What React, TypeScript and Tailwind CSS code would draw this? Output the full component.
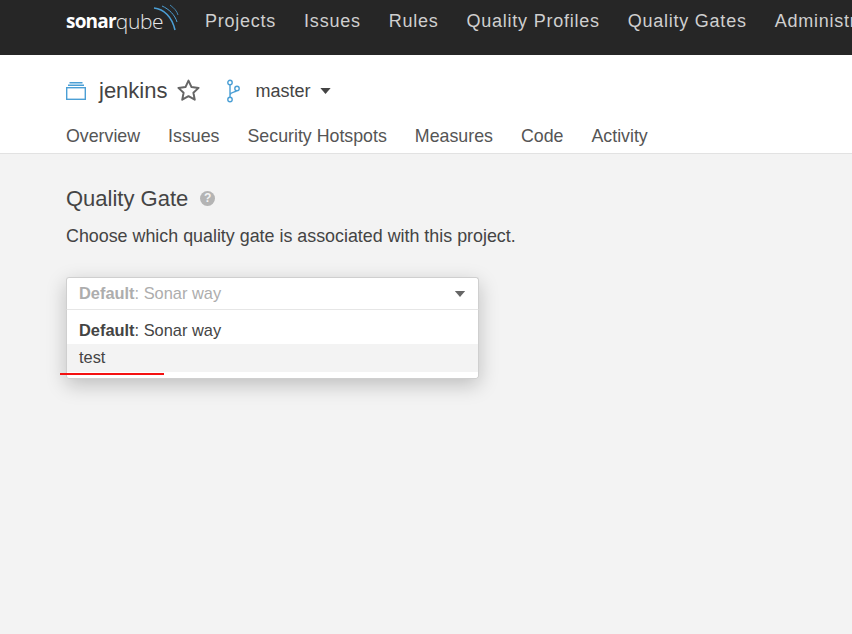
const navItems = ["Projects", "Issues", "Rules", "Quality Profiles", "Quality Gates", "Administration"];
const tabs = ["Overview", "Issues", "Security Hotspots", "Measures", "Code", "Activity"];

function Caret({ className }: { className: string }) {
  return (
    <svg viewBox="0 0 12 7" className={className}>
      <path d="M0 0h12L6 7z" fill="currentColor" />
    </svg>
  );
}

export default function App() {
  return (
    <div className="h-[634px] w-[852px] overflow-hidden bg-[#f3f3f3] font-['Liberation_Sans',Arial,sans-serif] text-[#444]">
      <header className="flex h-[55px] items-start overflow-hidden whitespace-nowrap bg-[#262626] pl-[66px]">
        <div className="relative mr-[26px] flex h-[43px] w-[113px] shrink-0 items-center font-['Open_Sans',sans-serif]">
          <span className="text-[19px] font-bold tracking-[-0.8px] text-white">sonar</span>
          <span className="text-[21px] font-light tracking-[-0.4px] text-[#e8e8e8]">qube</span>
          <svg viewBox="0 0 30 32" className="absolute left-[84px] top-[3px] h-[32px] w-[30px]" fill="none">
            <path d="M4 5C14 6 22 14 25 27" stroke="#4b9fd5" strokeWidth="1.6" />
            <path d="M12 3C19 6 25 12 27 19" stroke="#4b9fd5" strokeWidth="1" />
            <path d="M20 2C24 5 27 8 28 12" stroke="#4b9fd5" strokeWidth="0.8" />
          </svg>
        </div>
        <nav className="flex h-[43px] items-center gap-[28px] text-[18px] tracking-[0.76px] text-[#cfcfcf]">
          {navItems.map((item) => (
            <a key={item}>{item}</a>
          ))}
        </nav>
      </header>

      <div className="h-[99px] border-b border-[#e2e2e2] bg-white px-[66px]">
        <div className="flex h-[71px] items-center">
          <svg viewBox="0 0 20 18" className="h-[18px] w-[20px]" fill="none" stroke="#4b9fd5" strokeWidth="1.4">
            <rect x="0.7" y="5.7" width="18.6" height="11.6" />
            <path d="M2 3.2h16M3.5 0.8h13" />
          </svg>
          <span className="ml-[13px] text-[22px] text-[#444]">jenkins</span>
          <svg viewBox="0 0 24 24" className="ml-[9px] h-[25px] w-[25px]" fill="none" stroke="#666" strokeWidth="1.9" strokeLinejoin="round">
            <path d="M12 2.5l2.9 6.2 6.8.8-5 4.6 1.3 6.7-6-3.3-6 3.3 1.3-6.7-5-4.6 6.8-.8z" />
          </svg>
          <svg viewBox="0 0 14 24" className="ml-[25px] h-[24px] w-[14px]" fill="none" stroke="#4b9fd5" strokeWidth="1.4">
            <circle cx="4" cy="3.5" r="2.2" />
            <circle cx="4" cy="20.5" r="2.2" />
            <circle cx="11" cy="9.5" r="2.2" />
            <path d="M4 5.7v12.6M4 16c0-3 6-2.5 6.5-4.5" />
          </svg>
          <span className="ml-[15px] pt-[1px] text-[18px] text-[#444]">master</span>
          <Caret className="ml-[9px] h-[6px] w-[11px] text-[#444]" />
        </div>
        <nav className="flex gap-[28px] text-[17.8px] leading-[20px] text-[#555]">
          {tabs.map((tab) => (
            <a key={tab}>{tab}</a>
          ))}
        </nav>
      </div>

      <main className="px-[66px] pt-[31px]">
        <div className="flex h-[26px] items-center">
          <h1 className="text-[22px] text-[#444]">Quality Gate</h1>
          <span className="ml-[12px] flex h-[15px] w-[15px] items-center justify-center rounded-full bg-[#b4b4b4] text-[12px] font-bold text-[#f3f3f3]">?</span>
        </div>
        <p className="mt-[14px] text-[17.88px] leading-[22px] text-[#444]">Choose which quality gate is associated with this project.</p>

        <div className="relative mt-[30px] w-[413px]">
          <div className="rounded-[3px] bg-white shadow-[0_6px_20px_rgba(0,0,0,0.22)]">
            <div className="flex h-[33px] items-center justify-between rounded-t-[3px] border border-[#cfcfcf] border-b-[#e6e6e6] px-[12px] text-[16.4px] text-[#adadad]">
              <span><b>Default</b>: Sonar way</span>
              <Caret className="h-[6px] w-[12px] text-[#666]" />
            </div>
            <div className="rounded-b-[3px] border-x border-b border-[#cfcfcf] py-[6px] text-[16.4px] text-[#444]">
              <div className="flex h-[28px] items-center pl-[12px]"><span><b>Default</b>: Sonar way</span></div>
              <div className="flex h-[28px] items-center bg-[#f3f3f3] pb-[2px] pl-[12px]">test</div>
            </div>
          </div>
          <div className="absolute left-[-6px] top-[96px] h-[2px] w-[104px] bg-[#f41111]" />
        </div>
      </main>
    </div>
  );
}
